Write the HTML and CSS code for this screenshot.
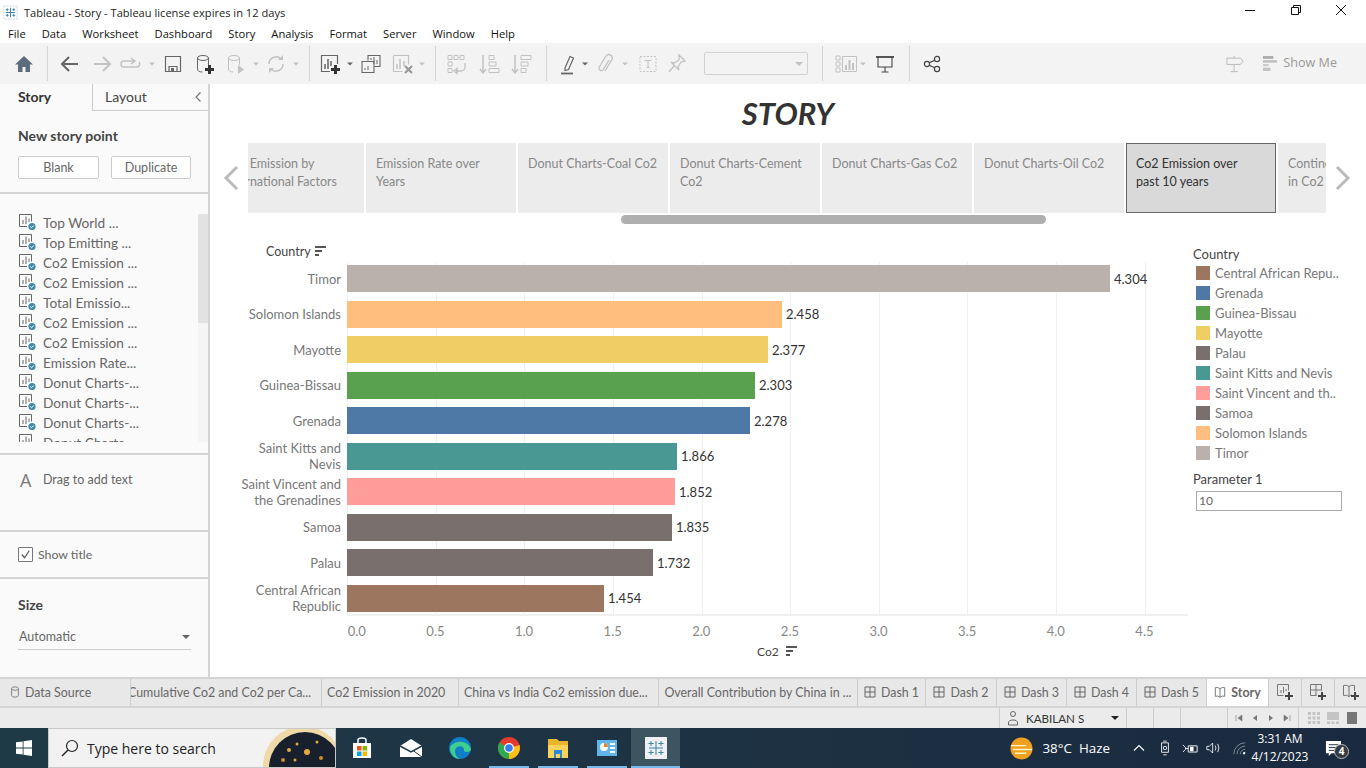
FILE: index.html
```html
<!DOCTYPE html>
<html>

<head>
    <meta charset="utf-8">
    <title>Tableau - Story</title>
    <link rel="stylesheet" href="styles.css">
</head>

<body>
    <svg class="defs">
        <symbol id="caret" viewBox="0 0 8 8"><path d="M0 2h8L4 6z" fill="currentColor" /></symbol>
        <symbol id="sheet" viewBox="0 0 18 18">
            <path d="M12 1.500H1.500v12H9" fill="none" stroke="#666" />
            <path d="M1.500 1.500h12v7" fill="none" stroke="#666" />
            <path d="M5 11V7M8 11V3.500M11 9V5.500" stroke="#666" />
            <circle cx="14" cy="13.500" r="3.600" fill="#3f88a8" />
            <path d="M12.200 13.500l1.300 1.300 2.300-2.400" fill="none" stroke="#fff" />
        </symbol>
        <symbol id="sort" viewBox="0 0 12 10">
            <path d="M0 0h11v2H0zM0 4h7v2H0zM0 8h4v2H0z" fill="#555" />
        </symbol>
        <symbol id="grid" viewBox="0 0 12 12">
            <path d="M1 1h10v10H1zM6 1v10M1 6h10" fill="none" stroke="#666" />
        </symbol>
    </svg>

    <div class="titlebar">
        <svg class="applogo" viewBox="0 0 16 16">
            <rect x="1" y="1" width="14" height="14" fill="none" stroke="#c9d6df" stroke-dasharray="2 1" />
            <path d="M8 3v10M3 8h10M4.500 3.500v3M3 5h3M11.500 3.500v3M10 5h3M4.500 9.500v3M3 11h3M11.500 9.500v3M10 11h3" stroke="#3a7fa8" />
        </svg>
        <span class="wintitle">Tableau - Story - Tableau license expires in 12 days</span>
        <div class="winbtns">
            <svg viewBox="0 0 12 12"><path d="M1 6.500h10" stroke="#111" /></svg>
            <svg viewBox="0 0 12 12"><path d="M1.500 3.500h7v7h-7zM3.500 3.500v-2h7v7h-2" fill="none" stroke="#111" /></svg>
            <svg viewBox="0 0 12 12"><path d="M1 1l10 10M11 1 1 11" stroke="#111" /></svg>
        </div>
    </div>

    <div class="menubar">
        <span>File</span><span>Data</span><span>Worksheet</span><span>Dashboard</span><span>Story</span><span>Analysis</span><span>Format</span><span>Server</span><span>Window</span><span>Help</span>
    </div>

    <div class="toolbar">
        <span class="tool s32 dark"><svg viewBox="0 0 24 24"><path d="M12 4 3 12.500h3V20h4.500v-5h3v5H18v-7.500h3z" fill="#5d6c7c" /></svg></span>
        <span class="sep s14"></span>
        <span class="tool s32 dark"><svg viewBox="0 0 24 24"><path d="M20 12H4M11 5l-7 7 7 7" fill="none" stroke="currentColor" stroke-width="2" /></svg></span>
        <span class="tool s32"><svg viewBox="0 0 24 24"><path d="M4 12h16M13 5l7 7-7 7" fill="none" stroke="currentColor" stroke-width="2" /></svg></span>
        <span class="tool s26"><svg viewBox="0 0 24 24"><path d="M15 9H5a3 3 0 0 0 0 6h13a3 3 0 0 0 2-5M12 6l4 3-4 3" fill="none" stroke="currentColor" stroke-width="1.500" /></svg></span>
        <span class="tool s16"><svg class="car" viewBox="0 0 8 8"><use href="#caret" /></svg></span>
        <span class="tool s26 dark"><svg viewBox="0 0 24 24"><path d="M4.500 4.500h15v15h-15zM8 19.500v-5h8v5" fill="none" stroke="currentColor" stroke-width="1.200" /><path d="M10 16h3v3h-3z" fill="currentColor" /></svg></span>
        <span class="tool s38 dark"><svg viewBox="0 0 24 24"><ellipse cx="10" cy="6" rx="5.500" ry="2.500" fill="none" stroke="currentColor" /><path d="M4.500 6v11q0 3 5 3M15.500 6v7" fill="none" stroke="currentColor" /><path d="M15 13h3v3h3v3h-3v3h-3v-3h-3v-3h3z" fill="#333" /></svg></span>
        <span class="tool s24"><svg viewBox="0 0 24 24"><ellipse cx="10" cy="6" rx="5.500" ry="2.500" fill="none" stroke="currentColor" /><path d="M4.500 6v11q0 3 5 3M15.500 6v7" fill="none" stroke="currentColor" /><path d="M14 13l6 4.500-6 4.500z" fill="currentColor" /></svg></span>
        <span class="tool s16"><svg class="car" viewBox="0 0 8 8"><use href="#caret" /></svg></span>
        <span class="tool s24"><svg viewBox="0 0 24 24"><path d="M5 12a7 7 0 0 1 12-5M19 12a7 7 0 0 1-12 5" fill="none" stroke="currentColor" stroke-width="1.500" /><path d="M14 8h5V3zM10 16H5v5z" fill="currentColor" /></svg></span>
        <span class="tool s16"><svg class="car" viewBox="0 0 8 8"><use href="#caret" /></svg></span>
        <span class="sep s10"></span>
        <span class="tool s32 dark"><svg viewBox="0 0 24 24"><path d="M14 3.500H3.500v16H12M14 3.500h5.500V12" fill="none" stroke="currentColor" stroke-width="1.200" /><path d="M7 17v-5M10 17V7M13 14V9" stroke="currentColor" stroke-width="1.500" /><path d="M16 13h3v3h3v3h-3v3h-3v-3h-3v-3h3z" fill="#333" /></svg></span>
        <span class="tool s8 dark"><svg class="car" viewBox="0 0 8 8"><use href="#caret" /></svg></span>
        <span class="tool s34 dark"><svg viewBox="0 0 24 24"><path d="M9 8.500V3.500h12v11h-6" fill="none" stroke="currentColor" stroke-width="1.100" /><path d="M3 9.500h12v11H3z" fill="none" stroke="currentColor" stroke-width="1.100" /><path d="M12 8V6M15 12V5M18 12V8M6 18v-2M9 18v-4" stroke="currentColor" /></svg></span>
        <span class="tool s28"><svg viewBox="0 0 24 24"><path d="M3.500 3.500h15v9M3.500 3.500v16h9" fill="none" stroke="currentColor" stroke-width="1.200" /><path d="M7 17v-5M10 17V7M14 14V9" stroke="currentColor" stroke-width="1.500" /><path d="M15 14l7 7M22 14l-7 7" stroke="#999" stroke-width="2.200" /></svg></span>
        <span class="tool s12"><svg class="car" viewBox="0 0 8 8"><use href="#caret" /></svg></span>
        <span class="sep s14"></span>
        <span class="tool s30"><svg viewBox="0 0 24 24"><path d="M3 3.500h4v4H3zM9 3.500h4v4H9zM15 3.500h4v4h-4zM3 10h4v4H3zM3 16.500h4v4H3z" fill="none" stroke="currentColor" /><path d="M20 11v4a4 4 0 0 1-4 4h-5M9 19l3-2.500v5z" fill="none" stroke="currentColor" stroke-width="1.300" /></svg></span>
        <span class="tool s36"><svg viewBox="0 0 24 24"><path d="M5 3v17M2 17l3 4 3-4" fill="none" stroke="currentColor" stroke-width="1.500" /><path d="M11 3.500h5v4h-5zM11 10h7v4h-7zM11 16.500h10v4H11z" fill="none" stroke="currentColor" /></svg></span>
        <span class="tool s28"><svg viewBox="0 0 24 24"><path d="M5 3v17M2 17l3 4 3-4" fill="none" stroke="currentColor" stroke-width="1.500" /><path d="M11 3.500h10v4H11zM11 10h7v4h-7zM11 16.500h5v4h-5z" fill="none" stroke="currentColor" /></svg></span>
        <span class="sep s20"></span>
        <span class="tool s24 dark"><svg viewBox="0 0 24 24"><path d="M9 16 14 4.500l3.500 1.500-5 11.500-3.500 1z" fill="none" stroke="currentColor" stroke-width="1.200" /><path d="M5 21.500h12" stroke="currentColor" stroke-width="1.800" /></svg></span>
        <span class="tool s10 dark"><svg class="car" viewBox="0 0 8 8"><use href="#caret" /></svg></span>
        <span class="tool s30"><svg viewBox="0 0 24 24"><path d="M16 8l-6 10a2.500 2.500 0 0 1-4-2.500l7-11.500a3.500 3.500 0 0 1 6 3.500l-7 11.500" fill="none" stroke="currentColor" stroke-width="1.300" /></svg></span>
        <span class="tool s10"><svg class="car" viewBox="0 0 8 8"><use href="#caret" /></svg></span>
        <span class="tool s36"><svg viewBox="0 0 24 24"><path d="M4 4.500h16v15H4z" fill="none" stroke="currentColor" stroke-dasharray="2 1.500" /><path d="M8.500 8.500h7M12 8.500v7M10.500 15.500h3" fill="none" stroke="currentColor" /></svg></span>
        <span class="tool s22"><svg viewBox="0 0 24 24"><path d="M14 3l6 6-4 1-3 5 1 3-8-8 3 1 5-3zM9 14l-5 6" fill="none" stroke="currentColor" stroke-width="1.300" /></svg></span>
        <span class="selectbox"><svg class="car" viewBox="0 0 8 8"><use href="#caret" /></svg></span>
        <span class="sep s28"></span>
        <span class="tool s20"><svg viewBox="0 0 24 24"><path d="M2 4h4v4H2zM2 10h4v4H2zM2 16h4v4H2zM8.500 4.500h14v15h-14z" fill="none" stroke="currentColor" /><path d="M12 18v-5M15.500 18V8M19 18v-7" stroke="currentColor" stroke-width="2" /></svg></span>
        <span class="tool s14"><svg class="car" viewBox="0 0 8 8"><use href="#caret" /></svg></span>
        <span class="tool s30 dark"><svg viewBox="0 0 24 24"><path d="M3 5h18" stroke="#444" stroke-width="1.800" /><path d="M5 5v10h14V5M12 15v5M8.500 20h7" fill="none" stroke="#444" stroke-width="1.100" /></svg></span>
        <span class="sep s18"></span>
        <span class="tool s28 dark"><svg viewBox="0 0 24 24"><circle cx="7" cy="12" r="2.600" fill="none" stroke="#444" stroke-width="1.200" /><circle cx="17" cy="7" r="2.600" fill="none" stroke="#444" stroke-width="1.200" /><circle cx="17" cy="17" r="2.600" fill="none" stroke="#444" stroke-width="1.200" /><path d="M9.300 10.800l5.400-2.600M9.300 13.200l5.400 2.600" stroke="#444" stroke-width="1.200" /></svg></span>
        <div class="tool-right">
            <svg class="sign" viewBox="0 0 20 20"><path d="M1 3.500h15l3 3.500-3 3.500H1zM9 1v2.500M9 10.500V18M5 18.500h8" fill="none" stroke="#bbb" stroke-width="1.100" /></svg>
            <svg class="showme-ic" viewBox="0 0 15 16"><path d="M0 0h11v3H0z" fill="#aaa" /><path d="M0 4.500h15v2.500H0z" fill="#bbb" /><path d="M0 8.500h6V11H0z" fill="#ccc" /><path d="M0 12.500h8V16H0z" fill="#c4c4c4" /></svg>
            <span class="showme">Show Me</span>
        </div>
    </div>

    <div class="main">
        <aside class="panel">
            <div class="ptabs">
                <div class="ptab on">Story</div>
                <div class="ptab">Layout<svg class="collapse" viewBox="0 0 8 12"><path d="M6.500 1.500 2 6l4.500 4.500" fill="none" stroke="#777" stroke-width="1.200" /></svg></div>
            </div>
            <div class="newpoint">
                <h4>New story point</h4>
                <div class="btnrow">
                    <button class="btn">Blank</button>
                    <button class="btn">Duplicate</button>
                </div>
            </div>
            <div class="listsec">
                <div class="points">
                    <div class="pointlist">
                        <div class="point"><svg><use href="#sheet" /></svg>Top World ...</div>
                        <div class="point"><svg><use href="#sheet" /></svg>Top Emitting ...</div>
                        <div class="point"><svg><use href="#sheet" /></svg>Co2 Emission ...</div>
                        <div class="point"><svg><use href="#sheet" /></svg>Co2 Emission ...</div>
                        <div class="point"><svg><use href="#sheet" /></svg>Total Emissio...</div>
                        <div class="point"><svg><use href="#sheet" /></svg>Co2 Emission ...</div>
                        <div class="point"><svg><use href="#sheet" /></svg>Co2 Emission ...</div>
                        <div class="point"><svg><use href="#sheet" /></svg>Emission Rate...</div>
                        <div class="point"><svg><use href="#sheet" /></svg>Donut Charts-...</div>
                        <div class="point"><svg><use href="#sheet" /></svg>Donut Charts-...</div>
                        <div class="point"><svg><use href="#sheet" /></svg>Donut Charts-...</div>
                        <div class="point"><svg><use href="#sheet" /></svg>Donut Charts-...</div>
                    </div>
                    <div class="pscroll"><div class="pthumb"></div></div>
                </div>
            </div>
            <div class="dragtext"><span class="biga">A</span>Drag to add text</div>
            <div class="showtitle">
                <span class="check"><svg viewBox="0 0 14 14"><path d="M3 7l3 3.500L11 3" fill="none" stroke="#555" stroke-width="1.300" /></svg></span>Show title
            </div>
            <div class="sizesec">
                <h4>Size</h4>
                <div class="sizesel">Automatic<svg viewBox="0 0 8 8"><use href="#caret" /></svg></div>
            </div>
        </aside>

        <section class="stage">
            <h1 class="storytitle">STORY</h1>

            <div class="navrow">
                <svg class="chev" viewBox="0 0 16 26"><path d="M14 2 3 13l11 11" fill="none" stroke="#bbb" stroke-width="3" /></svg>
                <div class="strip">
                    <div class="card first">Co2 Emission by<br>International Factors</div>
                    <div class="card">Emission Rate over<br>Years</div>
                    <div class="card">Donut Charts-Coal Co2</div>
                    <div class="card">Donut Charts-Cement<br>Co2</div>
                    <div class="card">Donut Charts-Gas Co2</div>
                    <div class="card">Donut Charts-Oil Co2</div>
                    <div class="card sel">Co2 Emission over<br>past 10 years</div>
                    <div class="card">Continents Share<br>in Co2</div>
                </div>
                <svg class="chev" viewBox="0 0 16 26"><path d="M2 2l11 11L2 24" fill="none" stroke="#bbb" stroke-width="3" /></svg>
            </div>
            <div class="stripbar"><div class="stripthumb"></div></div>

            <div class="viz">
                <div class="chartwrap">
                    <div class="rowhead">Country<svg><use href="#sort" /></svg></div>
                    <div class="plot">
                        <div class="row"><div class="lbl">Timor</div><div class="bar timor" style="width:763px"></div><span class="val">4.304</span></div>
                        <div class="row"><div class="lbl">Solomon Islands</div><div class="bar solomon" style="width:435px"></div><span class="val">2.458</span></div>
                        <div class="row"><div class="lbl">Mayotte</div><div class="bar mayotte" style="width:421px"></div><span class="val">2.377</span></div>
                        <div class="row"><div class="lbl">Guinea-Bissau</div><div class="bar guinea" style="width:408px"></div><span class="val">2.303</span></div>
                        <div class="row"><div class="lbl">Grenada</div><div class="bar grenada" style="width:403px"></div><span class="val">2.278</span></div>
                        <div class="row"><div class="lbl">Saint Kitts and<br>Nevis</div><div class="bar kitts" style="width:330px"></div><span class="val">1.866</span></div>
                        <div class="row"><div class="lbl">Saint Vincent and<br>the Grenadines</div><div class="bar vincent" style="width:328px"></div><span class="val">1.852</span></div>
                        <div class="row"><div class="lbl">Samoa</div><div class="bar samoa" style="width:325px"></div><span class="val">1.835</span></div>
                        <div class="row"><div class="lbl">Palau</div><div class="bar palau" style="width:306px"></div><span class="val">1.732</span></div>
                        <div class="row"><div class="lbl">Central African<br>Republic</div><div class="bar car-rep" style="width:257px"></div><span class="val">1.454</span></div>
                    </div>
                    <div class="ticks">
                        <span>0.0</span><span>0.5</span><span>1.0</span><span>1.5</span><span>2.0</span><span>2.5</span><span>3.0</span><span>3.5</span><span>4.0</span><span>4.5</span>
                    </div>
                    <div class="axistitle">Co2<svg><use href="#sort" /></svg></div>
                </div>

                <div class="legend">
                    <div class="legtitle">Country</div>
                    <div class="legitem"><i class="car-rep"></i>Central African Repu..</div>
                    <div class="legitem"><i class="grenada"></i>Grenada</div>
                    <div class="legitem"><i class="guinea"></i>Guinea-Bissau</div>
                    <div class="legitem"><i class="mayotte"></i>Mayotte</div>
                    <div class="legitem"><i class="palau"></i>Palau</div>
                    <div class="legitem"><i class="kitts"></i>Saint Kitts and Nevis</div>
                    <div class="legitem"><i class="vincent"></i>Saint Vincent and th..</div>
                    <div class="legitem"><i class="samoa"></i>Samoa</div>
                    <div class="legitem"><i class="solomon"></i>Solomon Islands</div>
                    <div class="legitem"><i class="timor"></i>Timor</div>
                    <div class="legtitle param">Parameter 1</div>
                    <div class="paraminput">10</div>
                </div>
            </div>
        </section>
    </div>

    <div class="tabs">
        <div class="tab t-ds"><svg viewBox="0 0 12 14"><ellipse cx="6" cy="3" rx="4" ry="2" fill="none" stroke="#777" /><path d="M2 3v8q0 2 4 2t4-2V3" fill="none" stroke="#777" /></svg>Data Source</div>
        <div class="tab t-cum"><span class="cut">Cumulative Co2 and Co2 per Ca...</span></div>
        <div class="tab t-2020">Co2 Emission in 2020</div>
        <div class="tab t-china">China vs India Co2 emission due...</div>
        <div class="tab t-over">Overall Contribution by China in ...</div>
        <div class="tab t-d1"><svg><use href="#grid" /></svg>Dash 1</div>
        <div class="tab t-d2"><svg><use href="#grid" /></svg>Dash 2</div>
        <div class="tab t-d3"><svg><use href="#grid" /></svg>Dash 3</div>
        <div class="tab t-d3"><svg><use href="#grid" /></svg>Dash 4</div>
        <div class="tab t-d3"><svg><use href="#grid" /></svg>Dash 5</div>
        <div class="tab t-story"><svg viewBox="0 0 14 14"><path d="M7 3Q4 1 1.500 2v10q3-1 5.500 1 2.500-2 5.500-1V2Q10 1 7 3zM7 3v10" fill="none" stroke="#666" /></svg>Story</div>
        <div class="tab t-add"><svg viewBox="0 0 18 18"><path d="M1.500 1.500h11v6M1.500 1.500v11h6" fill="none" stroke="#777" /><path d="M5 10V7M7.500 10V4M10 8V6" stroke="#777" /><path d="M12 9h2v3h3v2h-3v3h-2v-3H9v-2h3z" fill="#444" /></svg></div>
        <div class="tab t-add"><svg viewBox="0 0 18 18"><path d="M7.500 12.500h-6v-11h11v6M7 1.500v11M1.500 7h11" fill="none" stroke="#777" /><path d="M12 9h2v3h3v2h-3v3h-2v-3H9v-2h3z" fill="#444" /></svg></div>
        <div class="tab t-add"><svg viewBox="0 0 18 18"><path d="M7 3.500Q4 1.500 1.500 2.500v10q3-1 5.500 1 2-1.500 3-1.500M7 3.500Q9.500 1.500 12.500 2.500V8M7 3.500v10" fill="none" stroke="#777" /><path d="M12 9h2v3h3v2h-3v3h-2v-3H9v-2h3z" fill="#444" /></svg></div>
    </div>

    <div class="status">
        <div class="stuser">
            <svg viewBox="0 0 12 16"><circle cx="6" cy="4" r="2.500" fill="none" stroke="#666" /><path d="M1.500 15v-2q0-3 4.500-3t4.500 3v2z" fill="none" stroke="#666" /></svg>
            <span>KABILAN S</span>
            <svg class="stcar" viewBox="0 0 8 8"><use href="#caret" /></svg>
        </div>
        <div class="stcell w27"></div>
        <div class="stcell w27"></div>
        <div class="stcell w47"></div>
        <div class="stcell stnav">
            <svg viewBox="0 0 8 8"><path d="M1 1v6M7 1v6L3 4z" fill="#777" stroke="#777" stroke-width=".6" /></svg>
            <svg viewBox="0 0 8 8"><path d="M6 1v6L2 4z" fill="#777" /></svg>
            <svg viewBox="0 0 8 8"><path d="M2 1v6l4-3z" fill="#777" /></svg>
            <svg viewBox="0 0 8 8"><path d="M7 1v6M1 1v6l4-3z" fill="#777" stroke="#777" stroke-width=".6" /></svg>
        </div>
        <div class="stview">
            <svg viewBox="0 0 12 12"><path d="M0 0h3v3H0zM4.500 0h3v3h-3zM9 0h3v3H9zM0 4.500h3v3H0zM4.500 4.500h3v3h-3zM9 4.500h3v3H9zM0 9h3v3H0zM4.500 9h3v3h-3zM9 9h3v3H9z" fill="#c4c4c4" /></svg>
            <svg viewBox="0 0 12 12"><path d="M0 0h12v8H0zM0 9.500h3V12H0zM4.500 9.500h3V12h-3zM9 9.500h3V12H9z" fill="#c4c4c4" /></svg>
            <svg viewBox="0 0 12 12"><path d="M1 0h10v12H1z" fill="#777" /></svg>
        </div>
    </div>

    <div class="taskbar">
        <div class="startbtn"><svg viewBox="0 0 16 16"><path d="M0 2.300 6.700 1.400V7.600H0zM7.500 1.300 16 0v7.600H7.500zM0 8.400h6.700v6.200L0 13.700zM7.500 8.400H16V16l-8.500-1.200z" fill="#fff" /></svg></div>
        <div class="searchbox">
            <svg class="mag" viewBox="0 0 18 18"><circle cx="11" cy="7" r="5.500" fill="none" stroke="#222" stroke-width="1.200" /><path d="M7 11l-6 6" stroke="#222" stroke-width="1.400" /></svg>
            <span>Type here to search</span>
            <svg class="orb" viewBox="0 0 76 40">
                <circle cx="44" cy="38" r="40" fill="#f0d9a8" />
                <circle cx="46" cy="40" r="36" fill="#17202c" />
                <circle cx="30" cy="22" r="2" fill="#e3a93c" /><circle cx="38" cy="16" r="1.500" fill="#e3a93c" /><circle cx="48" cy="24" r="3" fill="#e3a93c" /><circle cx="24" cy="32" r="2" fill="#c98d2c" /><circle cx="58" cy="14" r="1.500" fill="#e3a93c" /><circle cx="36" cy="32" r="1.500" fill="#e3a93c" /><circle cx="62" cy="30" r="2" fill="#c98d2c" />
            </svg>
        </div>
        <div class="apps">
            <div class="app"><svg viewBox="0 0 24 24"><path d="M3 7h18v15H3z" fill="#fff" /><path d="M8 7V4q0-2 4-2t4 2v3" fill="none" stroke="#fff" stroke-width="1.500" /><path d="M7 10h4.500v4.500H7z" fill="#f25022" /><path d="M12.500 10H17v4.500h-4.500z" fill="#7fba00" /><path d="M7 15.500h4.500V20H7z" fill="#00a4ef" /><path d="M12.500 15.500H17V20h-4.500z" fill="#ffb900" /></svg></div>
            <div class="app"><svg viewBox="0 0 24 24"><path d="M12 3 23 10v11H1V10z" fill="#fff" /><path d="M1 10l11 6 11-6" fill="none" stroke="#1e3a47" stroke-width="1.500" /><path d="M23 21 14 14.500" stroke="#1e3a47" /></svg></div>
            <div class="app"><svg viewBox="0 0 24 24"><circle cx="12" cy="12" r="11" fill="#0f7fc9" /><path d="M2 12C4 4 20 3 23 13c0 3-5 4-7 2 1-4-3-6-7-4-3 2-3 9 3 12C6 23 2 18 2 12z" fill="#3ecf8e" /></svg></div>
            <div class="app"><svg viewBox="0 0 24 24"><circle cx="12" cy="12" r="11" fill="#e33b2e" /><path d="M12 12 22.500 9A11 11 0 0 1 12 23z" fill="#fbc116" /><path d="M12 12 12 23A11 11 0 0 1 2.500 6.500z" fill="#2da94f" /><circle cx="12" cy="12" r="5" fill="#fff" /><circle cx="12" cy="12" r="3.800" fill="#3b7ded" /></svg></div>
            <div class="app"><svg viewBox="0 0 24 24"><path d="M2 3h9l2 2h9v5H2z" fill="#e8b52e" /><path d="M2 9h20v13H2z" fill="#fbd35a" /><path d="M8 14h8v8h-2v-4h-4v4H8z" fill="#2d8bd6" /></svg></div>
            <div class="app"><svg viewBox="0 0 24 24"><path d="M2 4h20v16H2z" fill="#5fb6ea" /><circle cx="9" cy="11" r="4" fill="#fff" /><path d="M9 11V7a4 4 0 0 1 4 4z" fill="#e0843a" /><path d="M15 7h5v2h-5zM15 11h5v2h-5zM15 15h5v2h-5z" fill="#fff" /></svg></div>
            <div class="app active"><svg viewBox="0 0 24 24"><path d="M1 1h22v22H1z" fill="#eef2f5" /><path d="M12 5v14M5 12h14M7 5v5M4.500 7.500h5M17 5v5M14.500 7.500h5M7 14v5M4.500 16.500h5M17 14v5M14.500 16.500h5" stroke="#3d7ea6" /></svg></div>
        </div>
        <div class="tray">
            <svg class="sun" viewBox="0 0 24 24"><circle cx="12" cy="12" r="11.500" fill="#f0a020" /><path d="M1 9h16M3 13h20M5 17h12" stroke="#fff3c8" stroke-width="1.500" /></svg>
            <span class="temp">38°C&nbsp; Haze</span>
            <svg class="tr chevup" viewBox="0 0 12 12"><path d="M1 8.500 6 3.500l5 5" fill="none" stroke="#fff" stroke-width="1.100" /></svg>
            <svg class="tr cam" viewBox="0 0 14 18"><path d="M3 3h8v11H3zM5 1h4M5 17h4" fill="none" stroke="#fff" /><circle cx="7" cy="9" r="2" fill="none" stroke="#fff" /></svg>
            <svg class="tr plug" viewBox="0 0 18 14"><path d="M7 4h10v7H7zM1 3l3 3v2L1 11M4 7h3" fill="none" stroke="#fff" /><path d="M9 5h4v5H9z" fill="#fff" /></svg>
            <svg class="tr vol" viewBox="0 0 18 16"><path d="M1 6h3l4-4v12l-4-4H1z" fill="none" stroke="#fff" /><path d="M11 5q2 3 0 6M14 3q3 5 0 10" fill="none" stroke="#fff" /></svg>
            <svg class="tr wifi" viewBox="0 0 16 16"><path d="M1 15A14 14 0 0 1 15 1M5 15A10 10 0 0 1 15 5M9 15a6 6 0 0 1 6-6" fill="none" stroke="#8a9aa5" /><path d="M12 15a3 3 0 0 1 3-3v3z" fill="#fff" /></svg>
            <div class="clock"><div>3:31 AM</div><div>4/12/2023</div></div>
            <div class="notif">
                <svg viewBox="0 0 18 18"><path d="M1 1h16v13H7l-3 3v-3H1z" fill="#fff" /><path d="M4 5h10M4 8h10M4 11h7" stroke="#1a2a40" /></svg>
                <span class="badge">4</span>
            </div>
        </div>
    </div>
</body>

</html>
```

FILE: styles.css
```css
* {
    box-sizing: border-box;
}

html,
body {
    margin: 0;
    height: 768px;
    overflow: hidden;
}

body {
    width: 1366px;
    display: flex;
    flex-direction: column;
    background: #fff;
    font-family: "Lato", "Open Sans", sans-serif;
    color: #555;
}

.defs {
    display: none;
}

/* window chrome */
.titlebar {
    height: 24px;
    flex: none;
    display: flex;
    align-items: center;
    padding-left: 3px;
    font-family: "Open Sans", sans-serif;
    font-size: 11.1px;
    color: #222;
}

.applogo {
    width: 15px;
    height: 15px;
    margin-right: 6px;
}

.winbtns {
    margin-left: auto;
    display: flex;
    align-items: center;
    padding-right: 19px;
    gap: 33.5px;
}

.winbtns svg {
    width: 12px;
    height: 12px;
    margin-bottom: 4px;
}

.menubar {
    height: 19px;
    flex: none;
    display: flex;
    align-items: center;
    gap: 16px;
    padding-left: 8px;
    font-family: "Open Sans", sans-serif;
    font-size: 11.2px;
    color: #111;
}

.toolbar {
    height: 41px;
    flex: none;
    display: flex;
    align-items: center;
    padding-left: 8px;
    background: #f3f3f3;
    color: #c2c2c2;
}

.tool,
.sep {
    display: flex;
    align-items: center;
    justify-content: center;
    flex: none;
    height: 100%;
}

.tool svg {
    width: 24px;
    height: 24px;
    flex: none;
}

.tool svg.car {
    width: 6px;
    height: 6px;
}

.dark {
    color: #666;
}

.sep::after {
    content: "";
    width: 1px;
    height: 35px;
    background: #d4d4d4;
}

.s8 { width: 8px; }
.s10 { width: 10px; }
.s12 { width: 12px; }
.s14 { width: 14px; }
.s16 { width: 16px; }
.s18 { width: 18px; }
.s20 { width: 20px; }
.s22 { width: 22px; }
.s24 { width: 24px; }
.s26 { width: 26px; }
.s28 { width: 28px; }
.s30 { width: 30px; }
.s32 { width: 32px; }
.s34 { width: 34px; }
.s36 { width: 36px; }
.s38 { width: 38px; }

.selectbox {
    width: 104px;
    height: 23px;
    margin-left: 16px;
    border: 1px solid #d2d2d2;
    border-radius: 2px;
    display: flex;
    align-items: center;
    justify-content: flex-end;
    padding-right: 4px;
}

.selectbox svg {
    width: 8px;
    height: 8px;
}

.tool-right {
    margin-left: auto;
    display: flex;
    align-items: center;
    padding-right: 29px;
}

.sign {
    width: 18px;
    height: 18px;
    margin-right: 19px;
}

.showme-ic {
    width: 14px;
    height: 15px;
    margin-right: 6px;
}

.showme {
    font-family: "Open Sans", sans-serif;
    font-size: 12.6px;
    color: #999;
    margin-bottom: 2px;
}

/* main */
.main {
    flex: 1;
    display: flex;
    min-height: 0;
}

.panel {
    width: 210px;
    flex: none;
    background: #fafafa;
    border-right: 2px solid #d4d4d4;
    display: flex;
    flex-direction: column;
}

.ptabs {
    height: 27px;
    display: flex;
    flex: none;
    font-size: 14px;
}

.ptab {
    position: relative;
    flex: 1;
    padding: 4px 0 0 12px;
    border-left: 1px solid #ccc;
    border-bottom: 1px solid #ccc;
    color: #444;
}

.ptab.on {
    flex: 0 0 92px;
    padding-left: 18px;
    border: 0;
    font-weight: 700;
    color: #333;
}

.collapse {
    position: absolute;
    right: 6px;
    top: 7px;
    width: 8px;
    height: 12px;
}

.newpoint {
    height: 83px;
    flex: none;
    padding: 16px 0 0 18px;
    border-bottom: 2px solid #d4d4d4;
}

h4 {
    margin: 0;
    font-size: 14px;
    font-weight: 700;
    color: #444;
    line-height: 17px;
}

.btnrow {
    display: flex;
    gap: 12px;
    margin-top: 12px;
}

.btn {
    width: 81px;
    flex: none;
    height: 23px;
    padding: 0;
    background: #fff;
    border: 1px solid #ccc;
    border-radius: 2px;
    font: 12.5px "Lato", sans-serif;
    color: #666;
}

.btn + .btn {
    width: 80px;
}

.listsec {
    height: 261px;
    flex: none;
    padding-top: 20px;
    border-bottom: 2px solid #d4d4d4;
}

.points {
    display: flex;
    height: 228px;
    overflow: hidden;
}

.pointlist {
    flex: 1;
    margin-top: -2px;
    padding-left: 18px;
}

.point {
    height: 20px;
    display: flex;
    align-items: center;
    gap: 7px;
    font-size: 13.7px;
    color: #666;
    white-space: nowrap;
}

.point svg {
    width: 18px;
    height: 18px;
    flex: none;
}

.pscroll {
    width: 10px;
    background: #f5f5f5;
}

.pthumb {
    height: 109px;
    background: #e2e2e2;
}

.dragtext {
    height: 77px;
    flex: none;
    display: flex;
    align-items: flex-start;
    padding: 15px 0 0 20px;
    border-bottom: 2px solid #d4d4d4;
    font-size: 12.5px;
    line-height: 20px;
    color: #666;
}

.biga {
    width: 23px;
    font-family: "Open Sans", sans-serif;
    font-size: 18px;
    color: #777;
}

.showtitle {
    height: 47px;
    flex: none;
    display: flex;
    align-items: center;
    padding: 0 0 1px 18px;
    border-bottom: 2px solid #d4d4d4;
    font-size: 12.3px;
    color: #666;
}

.check {
    width: 15px;
    height: 15px;
    margin-right: 5px;
    border: 1px solid #777;
    border-radius: 1px;
    background: #fff;
    display: flex;
}

.sizesec {
    flex: 1;
    padding: 17px 17px 0 18px;
}

.sizesel {
    margin-top: 11px;
    height: 26px;
    display: flex;
    align-items: center;
    justify-content: space-between;
    border-bottom: 1px solid #ccc;
    padding-left: 1px;
    font-size: 12.5px;
    color: #666;
}

.sizesel svg {
    width: 8px;
    height: 8px;
    margin-right: 1px;
    color: #666;
}

/* story */
.stage {
    flex: 1;
    display: flex;
    flex-direction: column;
    min-width: 0;
}

.storytitle {
    margin: 0;
    height: 59px;
    flex: none;
    padding-top: 9px;
    text-align: center;
    font-size: 31px;
    line-height: 40px;
    font-weight: 700;
    font-style: italic;
    color: #333;
}

.navrow {
    height: 70px;
    flex: none;
    display: flex;
    align-items: center;
    padding-left: 13px;
}

.chev {
    width: 16px;
    height: 26px;
    flex: none;
}

.strip {
    width: 1078px;
    height: 70px;
    margin: 0 9px;
    display: flex;
    gap: 2px;
    overflow: hidden;
    flex: none;
}

.card {
    flex: 0 0 150px;
    padding: 12px 4px 0 10px;
    background: #ececec;
    font-size: 12.5px;
    line-height: 18px;
    color: #888;
    white-space: nowrap;
}

.card.first {
    margin-left: -34px;
}

.card.sel {
    background: #d9d9d9;
    border: 1px solid #666;
    padding: 11px 9px 0;
    color: #333;
}

.stripbar {
    height: 9px;
    margin-top: 2px;
    flex: none;
    padding-left: 411px;
}

.stripthumb {
    width: 425px;
    height: 100%;
    background: #afafaf;
    border-radius: 5px;
}

.viz {
    flex: 1;
    display: flex;
    min-height: 0;
}

.chartwrap {
    width: 983px;
    flex: none;
}

.rowhead {
    height: 33px;
    padding: 21px 0 0 56px;
    display: flex;
    align-items: center;
    gap: 4px;
    font-size: 12.5px;
    color: #444;
}

.rowhead svg,
.axistitle svg {
    width: 12px;
    height: 10px;
}

.plot {
    margin-top: 5px;
    width: 978px;
    padding: 3px 0 4px;
    display: flex;
    flex-direction: column;
    gap: 8.56px;
    background:
        linear-gradient(#f0f0f0, #f0f0f0) 137px 100% / 841px 2px no-repeat,
        repeating-linear-gradient(to right, #f0f0f0 0, #f0f0f0 1px, transparent 1px, transparent 88.64px) 137px 0 / 800px 100% no-repeat;
}

.row {
    height: 27px;
    display: flex;
    align-items: center;
}

.lbl {
    width: 131px;
    margin-right: 6px;
    flex: none;
    text-align: right;
    font-size: 13px;
    line-height: 16px;
    color: #777;
}

.bar {
    height: 100%;
}

.val {
    margin-left: 4px;
    font-size: 13px;
    color: #333;
}

.ticks {
    display: flex;
    margin-left: 92.5px;
    height: 30px;
    align-items: center;
    font-size: 13px;
    color: #888;
}

.ticks span {
    flex: 0 0 88.64px;
    text-align: center;
}

.ticks span:first-child {
    padding-left: 20px;
}

.axistitle {
    display: flex;
    align-items: center;
    gap: 7px;
    margin: -2px 0 0 547px;
    font-size: 12px;
    color: #444;
}

.legend {
    padding-top: 21px;
}

.legtitle {
    font-size: 13px;
    line-height: 18px;
    color: #444;
}

.legitem {
    height: 20px;
    display: flex;
    align-items: center;
    padding-left: 3px;
    font-size: 13px;
    color: #777;
    white-space: nowrap;
}

.legitem i {
    width: 14px;
    height: 14px;
    margin-right: 5px;
    flex: none;
}

.legtitle.param {
    margin-top: 7px;
}

.paraminput {
    margin: 3px 0 0 3px;
    width: 146px;
    height: 20px;
    padding-left: 2px;
    border: 1px solid #aaa;
    background: #fff;
    font-size: 12px;
    line-height: 18px;
    color: #666;
}

.timor { background: #bab0ac; }
.solomon { background: #ffbe7d; }
.mayotte { background: #f1ce63; }
.guinea { background: #59a14f; }
.grenada { background: #4e79a7; }
.kitts { background: #499894; }
.vincent { background: #ff9d9a; }
.samoa { background: #79706e; }
.palau { background: #79706e; }
.car-rep { background: #9d7660; }

/* sheet tabs */
.tabs {
    height: 31px;
    flex: none;
    display: flex;
    background: #e8e8e8;
    border-top: 2px solid #d4d4d4;
    border-bottom: 2px solid #d4d4d4;
    font-size: 12.4px;
    color: #666;
}

.tab {
    display: flex;
    align-items: center;
    justify-content: center;
    gap: 5px;
    flex: none;
    padding-bottom: 1px;
    border-right: 1px solid #ccc;
    white-space: nowrap;
    overflow: hidden;
}

.tab svg {
    width: 12px;
    height: 12px;
    flex: none;
}

.cut {
    margin-left: -3px;
}

.t-ds {
    width: 131px;
    justify-content: flex-start;
    padding-left: 9px;
    gap: 4px;
}

.t-cum { width: 191px; justify-content: flex-start; }
.t-2020 { width: 137px; justify-content: flex-start; padding-left: 5px; }
.t-china { width: 200px; justify-content: flex-start; padding-left: 5px; }
.t-over { width: 199px; }
.t-d1 { width: 68px; }
.t-d2 { width: 71px; }
.t-d3 { width: 70px; }

.t-story {
    width: 62px;
    background: #fff;
    font-weight: 700;
}

.t-add {
    width: 33px;
}

.t-add svg {
    width: 18px;
    height: 18px;
}

/* status bar */
.status {
    height: 20px;
    flex: none;
    display: flex;
    justify-content: flex-end;
    background: #ebebeb;
    font-size: 11.6px;
    color: #333;
}

.stuser,
.stcell,
.stview {
    display: flex;
    align-items: center;
    height: 100%;
    border-left: 1px solid #ccc;
}

.stuser {
    width: 127px;
    padding-left: 7px;
    gap: 7px;
}

.stuser svg {
    width: 12px;
    height: 16px;
}

.stuser svg.stcar {
    width: 8px;
    height: 8px;
    margin-left: auto;
    margin-right: 7px;
    color: #222;
}

.w27 { width: 27px; }
.w47 { width: 47px; }

.stnav {
    width: 71px;
    justify-content: center;
    gap: 8px;
}

.stnav svg {
    width: 8px;
    height: 8px;
}

.stview {
    width: 68px;
    justify-content: center;
    gap: 7px;
}

.stview svg {
    width: 12px;
    height: 12px;
}

/* windows taskbar */
.taskbar {
    height: 40px;
    flex: none;
    display: flex;
    color: #fff;
    background: linear-gradient(to right, #1f3a47, #1c2f42 70%, #1a2a40);
    font-family: "Open Sans", sans-serif;
}

.startbtn {
    width: 48px;
    display: flex;
    align-items: center;
    justify-content: center;
}

.startbtn svg {
    width: 16px;
    height: 16px;
}

.searchbox {
    width: 288px;
    display: flex;
    align-items: center;
    background: #f2f2f2;
    border: 1px solid #c8c8c8;
    color: #222;
    font-size: 14px;
    overflow: hidden;
}

.mag {
    width: 18px;
    height: 18px;
    margin: 0 8px 0 12px;
    flex: none;
}

.orb {
    width: 76px;
    height: 40px;
    margin-left: auto;
    flex: none;
}

.apps {
    display: flex;
    margin-left: 1px;
}

.app {
    width: 49px;
    display: flex;
    align-items: center;
    justify-content: center;
}

.app svg {
    width: 24px;
    height: 24px;
}

.app:nth-child(n+4) {
    background: linear-gradient(#76b9ed, #76b9ed) center bottom / 40px 2px no-repeat;
}

.app.active {
    background:
        linear-gradient(#76b9ed, #76b9ed) center bottom / 100% 2px no-repeat,
        #3d5560;
}

.tray {
    margin-left: auto;
    display: flex;
    align-items: center;
    padding-right: 13px;
    font-size: 13.4px;
}

.sun {
    width: 23px;
    height: 23px;
    margin-right: 9px;
}

.temp {
    margin-right: 23px;
}

.tr {
    flex: none;
}

.chevup { width: 12px; height: 12px; margin-right: 14px; }
.cam { width: 12px; height: 16px; margin-right: 11px; }
.plug { width: 16px; height: 13px; margin-right: 8px; }
.vol { width: 15px; height: 14px; margin-right: 12px; }
.wifi { width: 13px; height: 13px; margin-right: 4px; }

.clock {
    width: 60px;
    text-align: center;
    font-size: 12px;
    line-height: 18px;
}

.notif {
    position: relative;
    width: 40px;
    height: 100%;
    margin-left: 3px;
    display: flex;
    align-items: center;
    justify-content: center;
}

.notif svg {
    width: 17px;
    height: 17px;
}

.badge {
    position: absolute;
    right: 4px;
    top: 16px;
    width: 15px;
    height: 15px;
    border-radius: 50%;
    background: #333a42;
    border: 1px solid #bbb;
    font-size: 10px;
    font-weight: 700;
    line-height: 13px;
    text-align: center;
}
```
